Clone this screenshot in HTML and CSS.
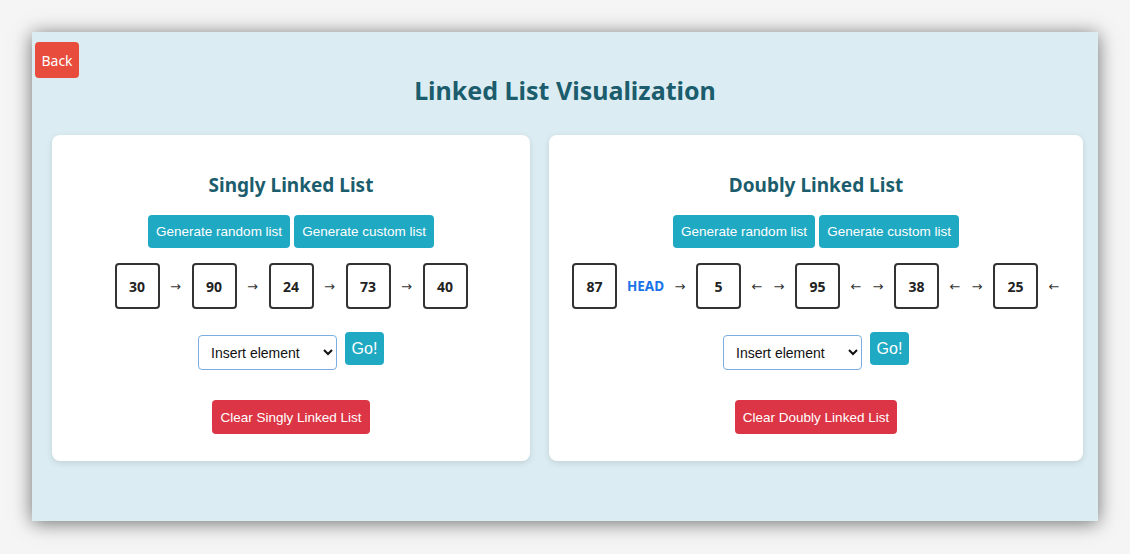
FILE: index.html
```html
<!DOCTYPE html>
<html>
<head>
<meta charset="utf-8">
<link rel="stylesheet" href="styles.css">
</head>
<body>
<div class="frame">
  <div class="topbar"><button class="back-btn">Back</button></div>
  <h1 class="title">Linked List Visualization</h1>
  <div class="cards">
    <div class="card card-left">
      <h2 class="card-title">Singly Linked List</h2>
      <div class="gen-row">
        <button class="btn btn-info">Generate random list</button>
        <button class="btn btn-info">Generate custom list</button>
      </div>
      <div class="list-row">
        <div class="node">30</div><span class="arrow">→</span>
        <div class="node">90</div><span class="arrow">→</span>
        <div class="node">24</div><span class="arrow">→</span>
        <div class="node">73</div><span class="arrow">→</span>
        <div class="node">40</div>
      </div>
      <div class="op-row">
        <select class="op-select"><option>Insert element</option></select>
        <button class="btn btn-info btn-go">Go!</button>
      </div>
      <div class="clear-row"><button class="btn btn-danger">Clear Singly Linked List</button></div>
    </div>
    <div class="card card-right">
      <h2 class="card-title">Doubly Linked List</h2>
      <div class="gen-row">
        <button class="btn btn-info">Generate random list</button>
        <button class="btn btn-info">Generate custom list</button>
      </div>
      <div class="list-row">
        <div class="node">87</div><span class="head">HEAD</span><span class="arrow">→</span>
        <div class="node">5</div><span class="arrow">←</span><span class="arrow">→</span>
        <div class="node">95</div><span class="arrow">←</span><span class="arrow">→</span>
        <div class="node">38</div><span class="arrow">←</span><span class="arrow">→</span>
        <div class="node">25</div><span class="arrow">←</span>
      </div>
      <div class="op-row">
        <select class="op-select"><option>Insert element</option></select>
        <button class="btn btn-info btn-go">Go!</button>
      </div>
      <div class="clear-row"><button class="btn btn-danger">Clear Doubly Linked List</button></div>
    </div>
  </div>
</div>
</body>
</html>
```

FILE: styles.css
```css
html, body {
  margin: 0;
  padding: 0;
  background: #f5f5f5;
}
body {
  width: 1130px;
  height: 554px;
  overflow: hidden;
  padding-top: 32px;
  padding-left: 32px;
  box-sizing: border-box;
}
.frame {
  width: 1066px;
  height: 489px;
  background: #dbedf3;
  box-shadow: 0 2px 18px rgba(0, 0, 0, 0.55);
  font-family: "Noto Sans", "Open Sans", sans-serif;
}
.topbar {
  padding: 10px 0 0 3px;
  height: 36px;
}
.back-btn {
  display: block;
  width: 44px;
  height: 36px;
  background: #e74c3c;
  color: #fff;
  border: none;
  border-radius: 4px;
  font-family: "Noto Sans", sans-serif;
  font-size: 14px;
  padding: 0;
}
.title {
  margin: 0;
  margin-top: -8px;
  text-align: center;
  font-size: 25px;
  font-weight: 700;
  color: #1b5d6c;
  line-height: 40px;
}
.cards {
  display: flex;
  gap: 19px;
  padding-left: 20px;
  margin-top: 25px;
  align-items: flex-start;
}
.card {
  background: #fff;
  border-radius: 8px;
  box-shadow: 0 2px 6px rgba(0, 0, 0, 0.12);
  height: 326px;
  box-sizing: border-box;
  padding-top: 36px;
  display: flex;
  flex-direction: column;
  align-items: center;
}
.card-left { width: 478px; }
.card-right { width: 534px; }
.card-title {
  margin: 0;
  font-size: 19px;
  font-weight: 700;
  color: #1b5d6c;
  line-height: 28px;
}
.gen-row {
  margin-top: 16px;
  display: flex;
  gap: 4px;
}
.btn {
  font-family: "Liberation Sans", Arial, sans-serif;
  font-size: 13.5px;
  color: #fff;
  border: none;
  border-radius: 4px;
  padding: 0 8px;
  height: 33px;
}
.btn-info { background: #20a9c3; }
.btn-danger { background: #dc3545; height: 34px; padding: 0 8px; }
.list-row {
  margin-top: 15px;
  display: flex;
  align-items: center;
}
.node {
  width: 45px;
  height: 46px;
  box-sizing: border-box;
  border: 2px solid #333;
  border-radius: 4px;
  margin: 0 5px;
  display: flex;
  align-items: center;
  justify-content: center;
  font-weight: 700;
  font-size: 14px;
  color: #222;
}
.arrow {
  margin: 0 5px;
  font-size: 13px;
  color: #333;
  width: 12px;
  text-align: center;
  font-family: "DejaVu Sans", sans-serif;
}
.head {
  margin: 0 5px;
  font-weight: 700;
  font-size: 13.5px;
  color: #1a73e8;
}
.op-row {
  margin-top: 23px;
  display: flex;
  align-items: flex-start;
  gap: 8px;
}
.op-select {
  margin-top: 3px;
  width: 139px;
  height: 35px;
  border: 1px solid #7aaee0;
  border-radius: 4px;
  background: #fff;
  font-family: "Liberation Sans", Arial, sans-serif;
  font-size: 14px;
  color: #111;
  padding: 0 8px;
}
.btn-go {
  width: 39px;
  padding: 0;
  font-size: 16px;
}
.clear-row {
  margin-top: 30px;
}
```
